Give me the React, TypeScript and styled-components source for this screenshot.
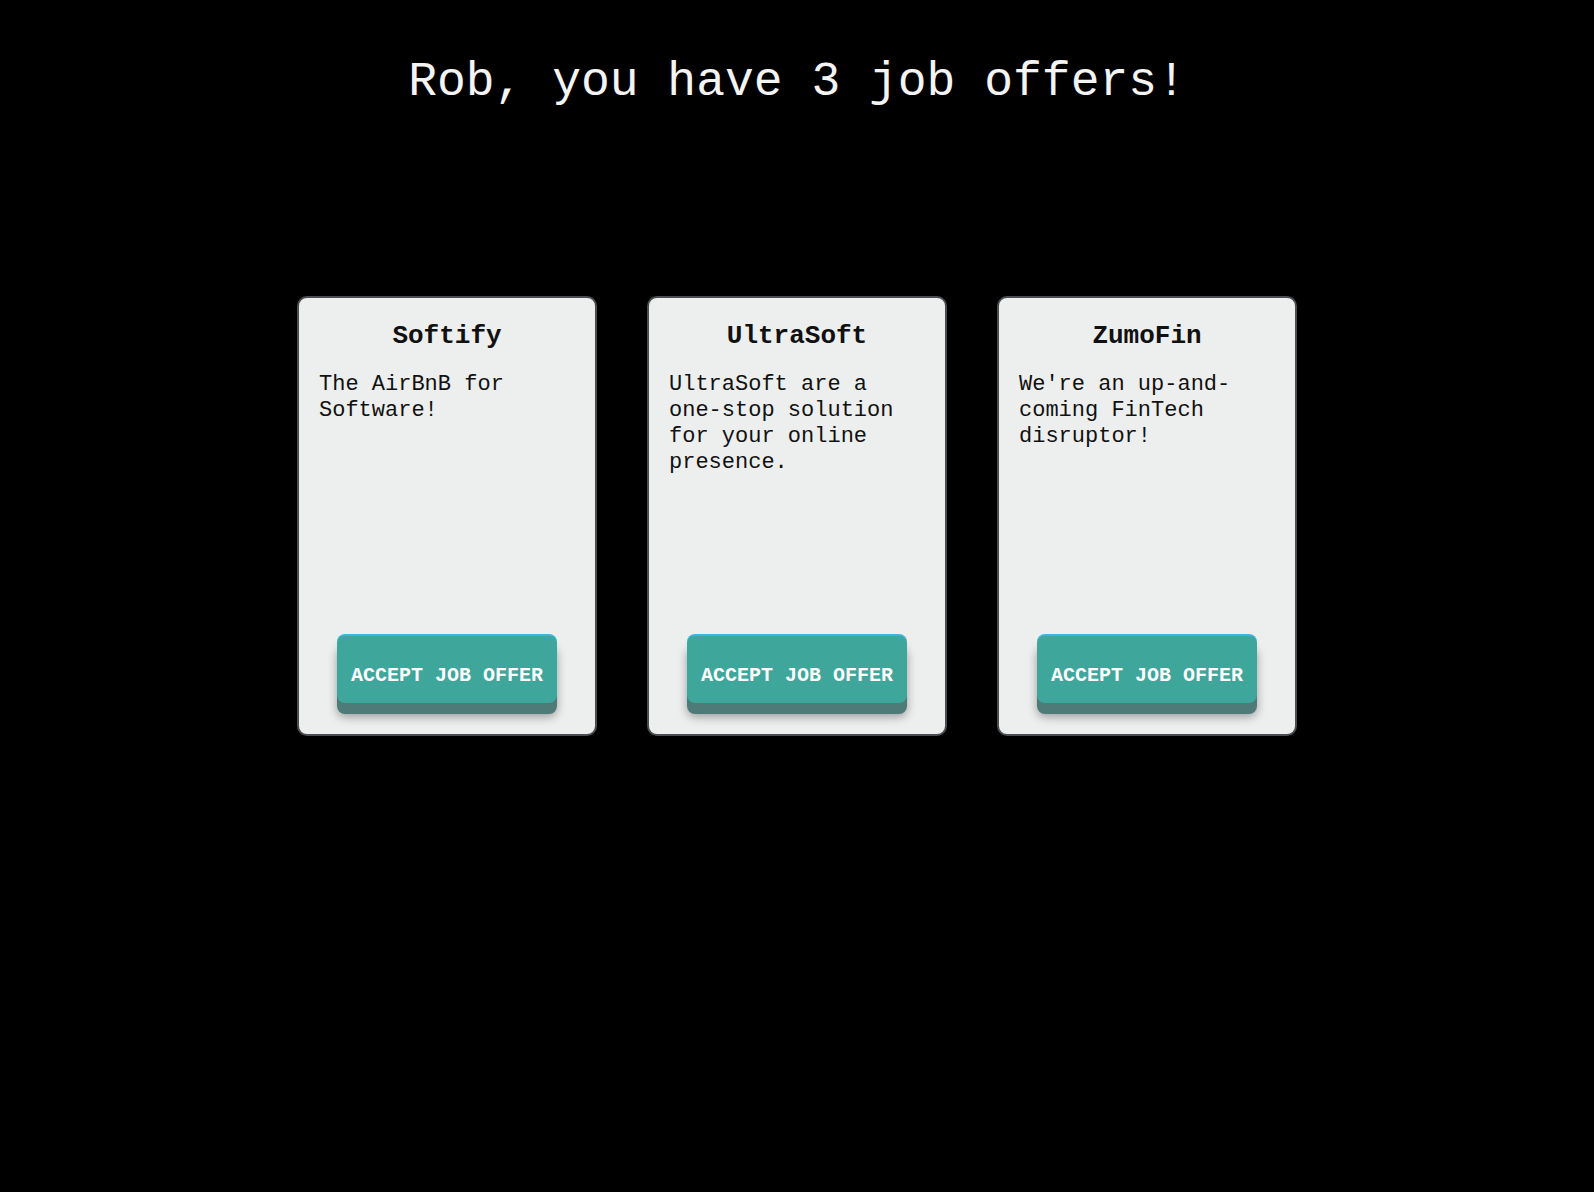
import React from "react";
import styled, { createGlobalStyle } from "styled-components";

const GlobalStyle = createGlobalStyle`
  html, body {
    margin: 0;
    padding: 0;
    background: #000000;
  }
  body {
    font-family: "Liberation Mono", "Courier New", monospace;
    min-height: 1192px;
  }
`;

const Page = styled.main`
  display: flex;
  flex-direction: column;
  align-items: center;
  padding-top: 54px;
`;

const Heading = styled.h1`
  margin: 0;
  font-family: "Liberation Mono", "Courier New", monospace;
  font-size: 48px;
  line-height: 56px;
  font-weight: 400;
  color: #f4f4f4;
  text-align: center;
`;

const CardRow = styled.section`
  display: flex;
  gap: 50px;
  margin-top: 186px;
`;

const Card = styled.article`
  box-sizing: border-box;
  width: 300px;
  height: 440px;
  display: flex;
  flex-direction: column;
  padding: 22px 20px 31px;
  background: #edefee;
  border: 2px solid #4a4d51;
  border-radius: 10px;
`;

const CardTitle = styled.h2`
  margin: 0;
  font-size: 26px;
  line-height: 32px;
  font-weight: 700;
  color: #111111;
  text-align: center;
`;

const CardText = styled.p`
  margin: 20px 0 0;
  font-size: 22px;
  line-height: 26px;
  color: #111111;
`;

const AcceptButton = styled.button`
  box-sizing: border-box;
  align-self: center;
  margin-top: auto;
  width: 220px;
  padding: 28px 0 15px;
  font-family: "Liberation Mono", "Courier New", monospace;
  font-size: 20px;
  line-height: 24px;
  font-weight: 700;
  color: #ffffff;
  text-transform: uppercase;
  background: #3ea69b;
  border: none;
  border-top: 2px solid #36b6e0;
  border-radius: 8px;
  box-shadow: 0 11px 0 #4e7a78, 0 14px 10px rgba(0, 0, 0, 0.35);
  cursor: pointer;
`;

type Offer = { company: string; blurb: string };

const offers: Offer[] = [
  { company: "Softify", blurb: "The AirBnB for Software!" },
  { company: "UltraSoft", blurb: "UltraSoft are a one-stop solution for your online presence." },
  { company: "ZumoFin", blurb: "We're an up-and-coming FinTech disruptor!" },
];

export default function App() {
  return (
    <>
      <GlobalStyle />
      <Page>
        <Heading>Rob, you have {offers.length} job offers!</Heading>
        <CardRow>
          {offers.map((o) => (
            <Card key={o.company}>
              <CardTitle>{o.company}</CardTitle>
              <CardText>{o.blurb}</CardText>
              <AcceptButton>Accept Job Offer</AcceptButton>
            </Card>
          ))}
        </CardRow>
      </Page>
    </>
  );
}
